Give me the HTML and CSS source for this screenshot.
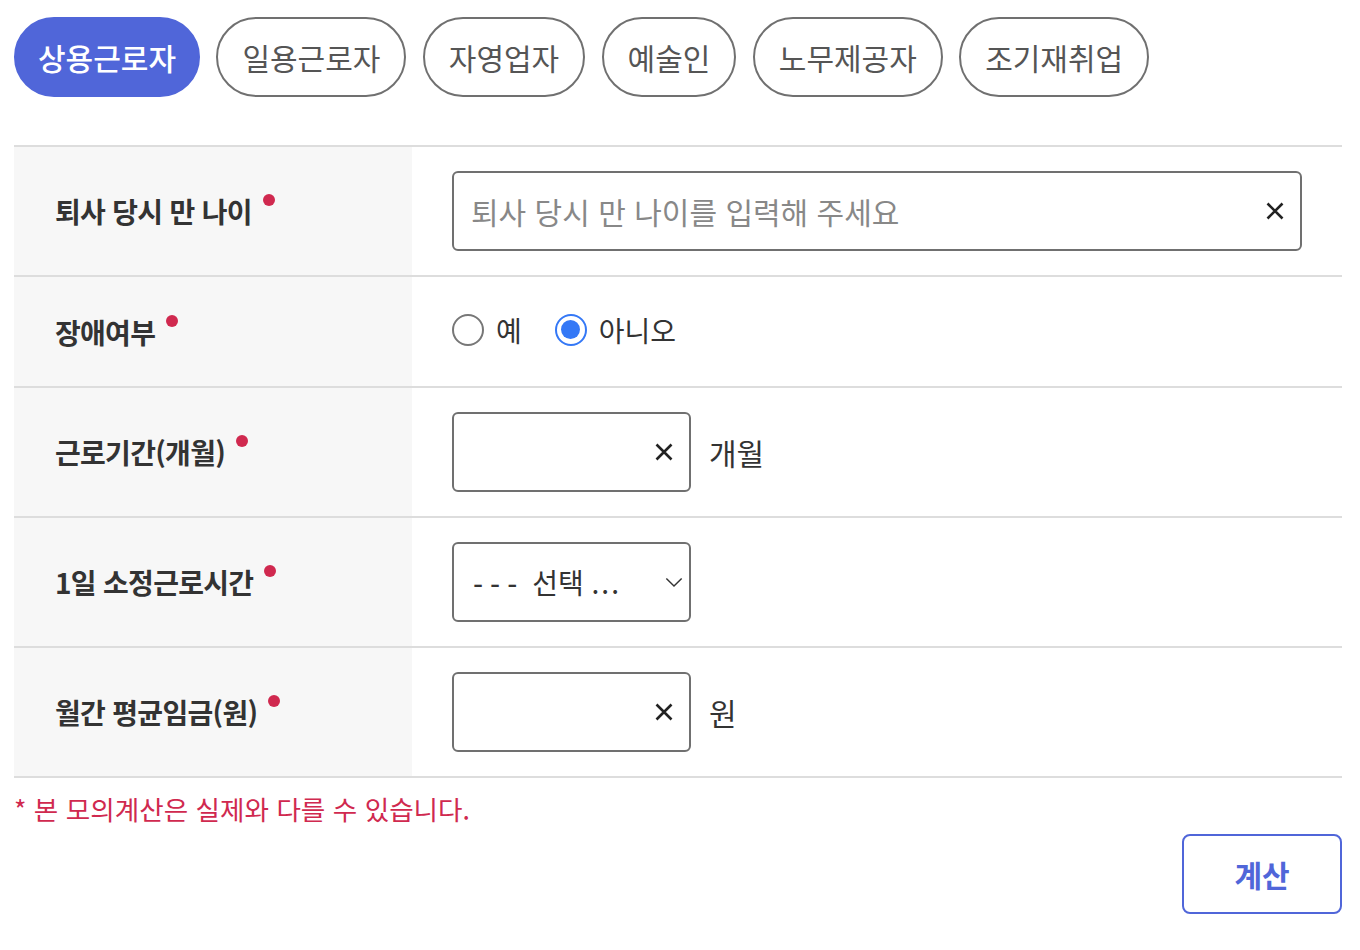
FILE: index.html
```html
<!DOCTYPE html>
<html lang="ko">
<head>
<meta charset="utf-8">
<title>모의계산</title>
<link rel="stylesheet" href="styles.css">
</head>
<body>
<div class="page">
  <nav class="tabs">
    <button class="tab active">상용근로자</button>
    <button class="tab">일용근로자</button>
    <button class="tab">자영업자</button>
    <button class="tab">예술인</button>
    <button class="tab">노무제공자</button>
    <button class="tab">조기재취업</button>
  </nav>

  <div class="form">
    <div class="row">
      <div class="label"><span class="req">퇴사 당시 만 나이</span></div>
      <div class="value">
        <div class="field wide">
          <input type="text" placeholder="퇴사 당시 만 나이를 입력해 주세요">
          <svg class="clear" viewBox="0 0 20 20" width="20" height="20"><path d="M2.5 2.5 L17.5 17.5 M17.5 2.5 L2.5 17.5" stroke="#222" stroke-width="2.6" fill="none"/></svg>
        </div>
      </div>
    </div>

    <div class="row short">
      <div class="label"><span class="req">장애여부</span></div>
      <div class="value">
        <div class="radios">
          <label class="radio"><span class="circle"></span><span class="rtext">예</span></label>
          <label class="radio checked"><span class="circle"></span><span class="rtext">아니오</span></label>
        </div>
      </div>
    </div>

    <div class="row">
      <div class="label"><span class="req">근로기간(개월)</span></div>
      <div class="value">
        <div class="field small">
          <input type="text">
          <svg class="clear" viewBox="0 0 20 20" width="20" height="20"><path d="M2.5 2.5 L17.5 17.5 M17.5 2.5 L2.5 17.5" stroke="#222" stroke-width="2.6" fill="none"/></svg>
        </div>
        <span class="unit">개월</span>
      </div>
    </div>

    <div class="row">
      <div class="label"><span class="req">1일 소정근로시간</span></div>
      <div class="value">
        <div class="select">
          <span class="seltext"><span class="dashes">---</span> 선택 <span class="dots">...</span></span>
          <svg class="chev" viewBox="0 0 20 12" width="18" height="11"><path d="M1.5 1.5 L10 10 L18.5 1.5" stroke="#333" stroke-width="1.6" fill="none"/></svg>
        </div>
      </div>
    </div>

    <div class="row">
      <div class="label"><span class="req">월간 평균임금(원)</span></div>
      <div class="value">
        <div class="field small">
          <input type="text">
          <svg class="clear" viewBox="0 0 20 20" width="20" height="20"><path d="M2.5 2.5 L17.5 17.5 M17.5 2.5 L2.5 17.5" stroke="#222" stroke-width="2.6" fill="none"/></svg>
        </div>
        <span class="unit">원</span>
      </div>
    </div>
  </div>

  <p class="note">* 본 모의계산은 실제와 다를 수 있습니다.</p>

  <div class="actions">
    <button class="calc">계산</button>
  </div>
</div>
</body>
</html>
```

FILE: styles.css
```css
* { box-sizing: border-box; }

html, body {
  margin: 0;
  padding: 0;
  background: #fff;
}

body {
  font-family: "Noto Sans CJK KR", "Noto Sans", sans-serif;
  color: #333;
}

.page {
  padding: 17px 18px 20px 14px;
}

.tabs {
  display: flex;
  gap: 16.4px;
}

.tab {
  height: 80px;
  padding: 0 24px;
  border: 2px solid #707070;
  border-radius: 40px;
  background: #fff;
  color: #555;
  font-family: inherit;
  font-size: 30px;
  line-height: 1;
  display: inline-flex;
  align-items: center;
  cursor: pointer;
}

.tab.active {
  padding: 0 22px;
  background: #5066d9;
  border-color: #5066d9;
  color: #fff;
  font-weight: 500;
}

.form {
  margin-top: 48px;
  border-top: 2px solid #dddddd;
}

.row {
  display: flex;
  min-height: 130px;
  border-bottom: 2px solid #dddddd;
}

.row.short {
  min-height: 111px;
}

.label {
  width: 398px;
  flex: none;
  background: #f7f7f7;
  display: flex;
  align-items: center;
  padding: 0 41px;
}

.req {
  font-size: 28px;
  font-weight: 700;
  color: #333;
  letter-spacing: -0.7px;
  line-height: 32px;
}

.req::after {
  content: "";
  display: inline-block;
  width: 12px;
  height: 12px;
  border-radius: 50%;
  background: #d0294f;
  margin-left: 11px;
  vertical-align: top;
  margin-top: -1px;
}

.value {
  flex: 1;
  display: flex;
  align-items: center;
  padding: 24px 40px;
}

.field {
  height: 80px;
  border: 2px solid #707070;
  border-radius: 6px;
  display: flex;
  align-items: center;
  padding: 0 15px 0 17px;
  background: #fff;
}

.field.wide {
  width: 100%;
}

.field.small {
  width: 239px;
}

.field input {
  flex: 1;
  min-width: 0;
  border: none;
  outline: none;
  background: transparent;
  font-family: inherit;
  font-size: 30px;
  color: #333;
  padding: 0;
  height: 100%;
}

.field input::placeholder {
  color: #888;
}

.clear {
  flex: none;
}

.unit {
  margin-left: 18px;
  font-size: 30px;
  color: #333;
}

.radios {
  display: flex;
  align-items: center;
  gap: 33px;
  margin-top: -4px;
}

.radio {
  display: flex;
  align-items: center;
  gap: 12px;
}

.circle {
  width: 32px;
  height: 32px;
  border-radius: 50%;
  border: 2px solid #777;
  display: flex;
  align-items: center;
  justify-content: center;
  background: #fff;
}

.radio.checked .circle {
  border: 2.5px solid #3478f6;
}

.radio.checked .circle::after {
  content: "";
  width: 19px;
  height: 19px;
  border-radius: 50%;
  background: #3478f6;
}

.rtext {
  font-size: 28px;
  color: #333;
  line-height: 1;
}

.select {
  width: 239px;
  height: 80px;
  border: 2px solid #707070;
  border-radius: 6px;
  display: flex;
  align-items: center;
  justify-content: space-between;
  padding: 0 6px 0 19px;
}

.seltext {
  font-size: 28px;
  color: #333;
  white-space: nowrap;
}

.dashes {
  font-family: "DejaVu Sans", sans-serif;
  letter-spacing: 7px;
}

.dots {
  letter-spacing: 2px;
}

.note {
  margin: 13px 0 0 0;
  font-size: 26.6px;
  color: #d0294f;
  line-height: 36px;
}

.actions {
  display: flex;
  justify-content: flex-end;
  margin-top: 7px;
}

.calc {
  width: 160px;
  height: 80px;
  border: 2px solid #5066d9;
  border-radius: 8px;
  background: #fff;
  color: #5066d9;
  font-family: inherit;
  font-size: 30px;
  font-weight: 700;
  cursor: pointer;
}
```
